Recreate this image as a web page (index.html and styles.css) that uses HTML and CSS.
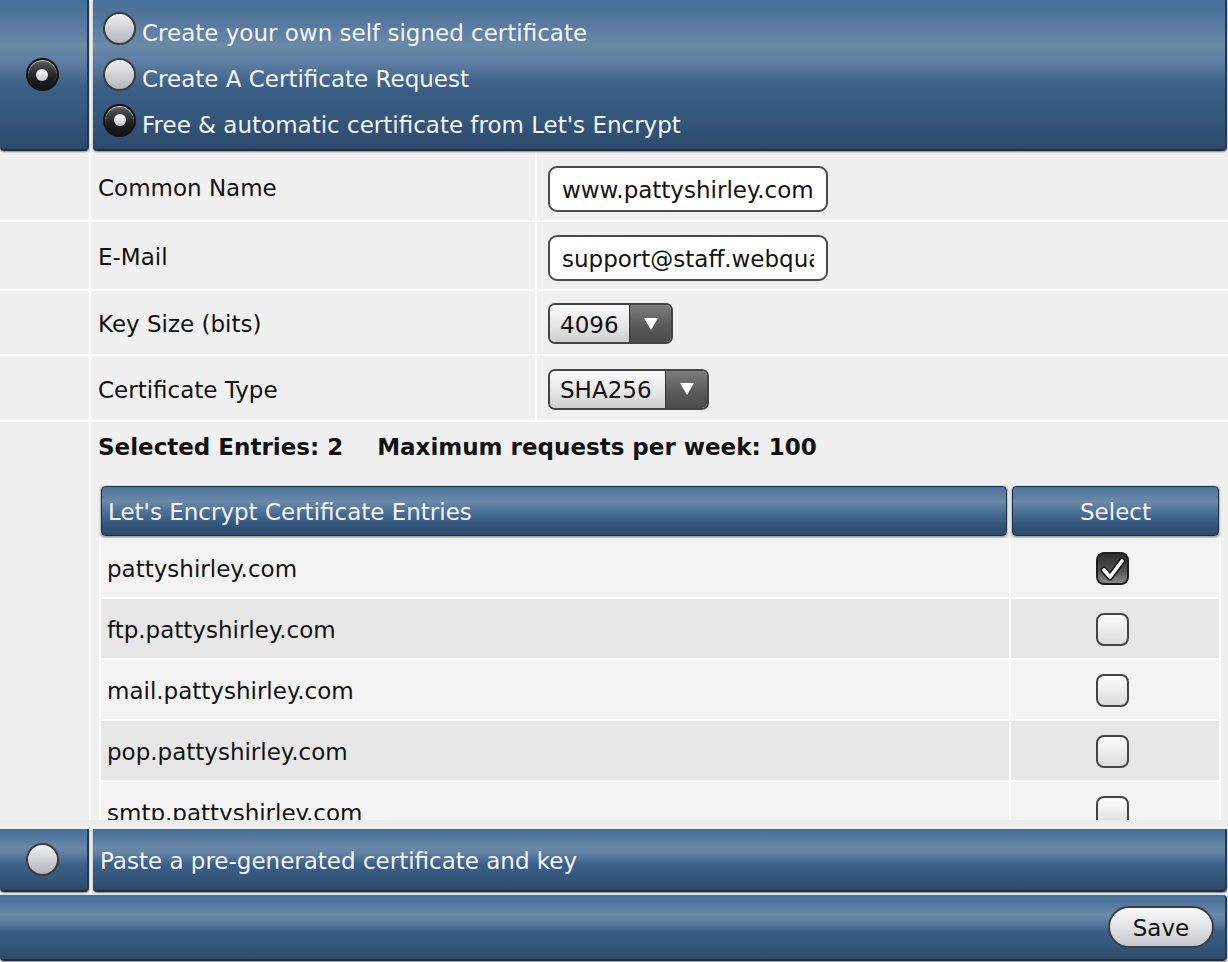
FILE: index.html
```html
<!DOCTYPE html>
<html lang="en">
<head>
    <meta charset="UTF-8">
    <title>SSL Certificate</title>
    <link rel="stylesheet" href="styles.css">
</head>
<body>
    <div class="page">
        <div class="option-row top">
            <div class="bar gutter"><span class="radio on"></span></div>
            <div class="bar options">
                <div class="opt"><span class="radio"></span><span class="opt-text">Create your own self signed certificate</span></div>
                <div class="opt"><span class="radio"></span><span class="opt-text">Create A Certificate Request</span></div>
                <div class="opt"><span class="radio on"></span><span class="opt-text">Free &amp; automatic certificate from Let's Encrypt</span></div>
            </div>
        </div>

        <div class="scroller">
            <div class="form-row tall">
                <div class="cell"></div>
                <div class="cell label">Common Name</div>
                <div class="cell value"><input class="text-field" type="text" value="www.pattyshirley.com"></div>
            </div>
            <div class="form-row tall">
                <div class="cell"></div>
                <div class="cell label">E-Mail</div>
                <div class="cell value"><input class="text-field" type="text" value="support@staff.webquarters.com"></div>
            </div>
            <div class="form-row short">
                <div class="cell"></div>
                <div class="cell label">Key Size (bits)</div>
                <div class="cell value">
                    <div class="select key-size"><span class="select-val">4096</span><span class="select-btn"><svg width="16" height="14" viewBox="0 0 16 14"><path d="M1 1h14L8 13z" fill="#fff"/></svg></span></div>
                </div>
            </div>
            <div class="form-row short2">
                <div class="cell"></div>
                <div class="cell label">Certificate Type</div>
                <div class="cell value">
                    <div class="select cert-type"><span class="select-val">SHA256</span><span class="select-btn"><svg width="16" height="14" viewBox="0 0 16 14"><path d="M1 1h14L8 13z" fill="#fff"/></svg></span></div>
                </div>
            </div>
            <div class="entries-row">
                <div class="cell"></div>
                <div class="cell entries">
                    <div class="summary"><span>Selected Entries: 2</span><span class="limit">Maximum requests per week: 100</span></div>
                    <div class="entries-head">
                        <div class="head-cell">Let's Encrypt Certificate Entries</div>
                        <div class="head-cell center">Select</div>
                    </div>
                    <div class="entries-body">
                        <div class="entry">pattyshirley.com</div>
                        <div class="entry check-cell"><span class="checkbox on"><svg width="28" height="28" viewBox="0 0 28 28"><path d="M5 15l6 7L23 6" fill="none" stroke="#1a1a1a" stroke-width="7" stroke-linejoin="round" stroke-linecap="round"/><path d="M5 15l6 7L23 6" fill="none" stroke="#fff" stroke-width="3.6" stroke-linejoin="round" stroke-linecap="round"/></svg></span></div>
                        <div class="entry alt">ftp.pattyshirley.com</div>
                        <div class="entry alt check-cell"><span class="checkbox"></span></div>
                        <div class="entry">mail.pattyshirley.com</div>
                        <div class="entry check-cell"><span class="checkbox"></span></div>
                        <div class="entry alt">pop.pattyshirley.com</div>
                        <div class="entry alt check-cell"><span class="checkbox"></span></div>
                        <div class="entry">smtp.pattyshirley.com</div>
                        <div class="entry check-cell"><span class="checkbox"></span></div>
                    </div>
                </div>
            </div>
        </div>
        <div class="scroll-foot"></div>

        <div class="option-row paste">
            <div class="bar gutter"><span class="radio"></span></div>
            <div class="bar paste-label">Paste a pre-generated certificate and key</div>
        </div>

        <div class="bar footer">
            <button class="save" type="button">Save</button>
        </div>
    </div>
</body>
</html>
```

FILE: styles.css
```css
body {
    margin: 0;
    background-color: #f1f1f1;
    font-family: "DejaVu Sans", Verdana, sans-serif;
    font-size: 23px;
    color: #111;
}
.page {
    width: 1228px;
    height: 962px;
    overflow: hidden;
}
.bar {
    background: linear-gradient(to bottom, #45709a 0%, #5779a0 16%, #6b89a8 30%, #5d7ea2 42%, #3b5f86 58%, #34577c 78%, #2d4a6b 100%);
    border-bottom: 2px solid #1f2f42;
    border-right: 2px solid #26384e;
    border-radius: 0 0 4px 4px;
    box-shadow: 0 1px 2px rgba(0, 0, 0, 0.45);
    color: #fff;
    box-sizing: border-box;
}
.option-row {
    display: grid;
    grid-template-columns: 89px 1134px;
    column-gap: 4px;
}
.option-row.top {
    height: 151px;
}
.gutter {
    display: flex;
    align-items: center;
    justify-content: center;
    padding-right: 3px;
}
.options {
    padding: 5px 0 0 10px;
}
.opt {
    display: flex;
    align-items: center;
    height: 46px;
    color: #f4f6f9;
}
.opt-text {
    margin-left: 6px;
    padding-top: 10px;
}
.radio {
    width: 29px;
    height: 29px;
    border-radius: 50%;
    border: 2px solid #3b3b3b;
    background: linear-gradient(to bottom, #eef0f2, #c9cdd2 60%, #b2b7bd);
    box-shadow: inset 0 1px 1px rgba(255, 255, 255, 0.8);
    position: relative;
    flex: none;
}
.radio.on {
    background: linear-gradient(to bottom, #5a5d61, #1d1e20 60%, #121314);
    border-color: #101010;
}
.radio.on::after {
    content: "";
    position: absolute;
    width: 12px;
    height: 12px;
    left: 8.5px;
    top: 8.5px;
    border-radius: 50%;
    background: linear-gradient(to bottom, #ffffff, #c4c6c9);
}

/* form area */
.scroller {
    margin-top: 2px;
    height: 667px;
    overflow: hidden;
    background: #fff;
}
.form-row, .entries-row {
    display: grid;
    grid-template-columns: 89px 444px 1fr;
    column-gap: 2px;
    margin-bottom: 2px;
}
.entries-row {
    grid-template-columns: 89px 1fr;
    margin-bottom: 0;
}
.form-row.tall { height: 67px; }
.form-row.short { height: 63px; }
.form-row.short2 { height: 64px; }
.cell {
    background: #f0f0f0;
}
.label {
    display: flex;
    align-items: center;
    padding: 3px 0 0 7px;
}
.value {
    display: flex;
    align-items: center;
    padding-left: 11px;
}
.text-field {
    width: 280px;
    height: 46px;
    box-sizing: border-box;
    border: 2px solid #4a4a4a;
    border-radius: 9px;
    padding: 2px 12px 0;
    font-family: inherit;
    font-size: 23px;
    color: #111;
    background: #fff;
    margin-top: 4px;
}
.select {
    display: flex;
    height: 41px;
    box-sizing: border-box;
    border: 2px solid #444;
    border-radius: 7px;
    overflow: hidden;
    margin-top: 2px;
}
.key-size { width: 125px; }
.cert-type { width: 161px; }
.select-val {
    flex: 1;
    display: flex;
    align-items: center;
    padding-left: 10px;
    padding-top: 2px;
    background: linear-gradient(to bottom, #fbfbfb, #e6e6e6 55%, #cfcfcf);
}
.select-btn {
    width: 41px;
    display: flex;
    align-items: center;
    justify-content: center;
    border-left: 1px solid #333;
    background: linear-gradient(to bottom, #7d7d7d, #5a5a5a 55%, #4c4c4c);
}

/* entries */
.entries {
    padding: 12px 7px 0 8px;
    height: 398px;
}
.summary {
    font-weight: bold;
    margin-left: -1px;
    height: 52px;
    white-space: nowrap;
}
.summary .limit {
    margin-left: 34px;
}
.entries-head {
    display: grid;
    grid-template-columns: 1fr 207px;
    column-gap: 5px;
    padding: 0 2px;
    height: 50px;
}
.head-cell {
    background: linear-gradient(to bottom, #4a739b 0%, #6b89a8 30%, #4f729a 50%, #34577c 75%, #2d4a6b 100%);
    border: 1px solid #1f2f42;
    border-radius: 4px;
    box-shadow: 0 1px 3px rgba(0, 0, 0, 0.5);
    color: #f4f6f9;
    display: flex;
    align-items: center;
    padding: 2px 0 0 6px;
}
.head-cell.center {
    justify-content: center;
    padding-left: 0;
}
.entries-body {
    margin-top: 2px;
    background: #fff;
    padding: 0 2px;
    display: grid;
    grid-template-columns: 1fr 208px;
    grid-auto-rows: 59px;
    gap: 2px;
}
.entry {
    background: #f3f3f3;
    display: flex;
    align-items: center;
    padding-left: 6px;
    padding-top: 2px;
}
.entry.alt {
    background: #e7e7e7;
}
.check-cell {
    justify-content: center;
    padding-left: 0;
}
.checkbox {
    width: 29px;
    height: 29px;
    margin-right: 5px;
    border: 2px solid #444;
    border-radius: 8px;
    background: linear-gradient(to bottom, #fdfdfd, #dcdcdc);
    display: flex;
    align-items: center;
    justify-content: center;
}
.checkbox.on {
    background: linear-gradient(to bottom, #2e2e2e, #565656 60%, #8a8a8a);
    border-color: #1e1e1e;
}
.scroll-foot {
    height: 6px;
    background: #ececec;
    margin-bottom: 3px;
}

/* bottom bars */
.option-row.paste {
    height: 63px;
}
.paste-label {
    display: flex;
    align-items: center;
    padding: 2px 0 0 7px;
    color: #f4f6f9;
}
.footer {
    margin-top: 3px;
    width: 1227px;
    height: 66px;
    border-radius: 0 4px 4px 4px;
    display: flex;
    align-items: center;
    justify-content: flex-end;
    padding-right: 11px;
}
.save {
    width: 106px;
    height: 42px;
    border: 2px solid #3d3d3d;
    border-radius: 21px;
    background: linear-gradient(to bottom, #f8f8f8, #dfe1e3 55%, #c3c7cb);
    font-family: inherit;
    font-size: 23px;
    color: #111;
    padding: 2px 0 0;
    cursor: pointer;
}
```
